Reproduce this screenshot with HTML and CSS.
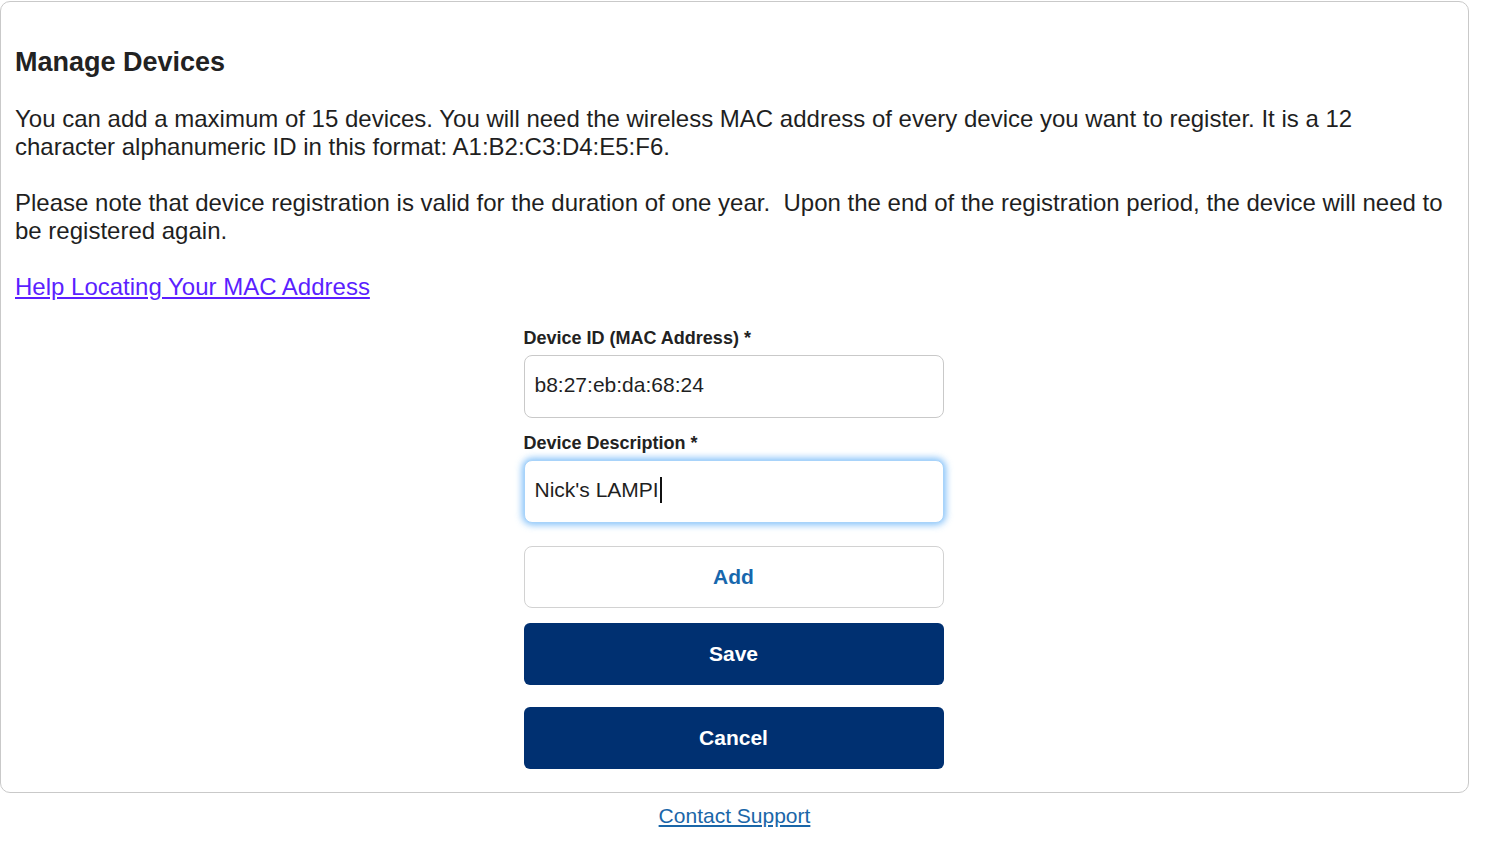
FILE: index.html
```html
<!DOCTYPE html>
<html lang="en">
<head>
<meta charset="utf-8">
<title>Manage Devices</title>
<link rel="stylesheet" href="styles.css">
</head>
<body>
<div class="page">
  <div class="card">
    <h2 class="title">Manage Devices</h2>
    <p class="text">You can add a maximum of 15 devices. You will need the wireless MAC address of every device you want to register. It is a 12 character alphanumeric ID in this format: A1:B2:C3:D4:E5:F6.</p>
    <p class="text">Please note that device registration is valid for the duration of one year.&nbsp; Upon the end of the registration period, the device will need to be registered again.</p>
    <p class="text"><a class="help-link" href="#">Help Locating Your MAC Address</a></p>
    <form class="form">
      <label class="label">Device ID (MAC Address) *</label>
      <div class="field">b8:27:eb:da:68:24</div>
      <label class="label">Device Description *</label>
      <div class="field field-focus">Nick's LAMPI<span class="caret"></span></div>
      <button type="button" class="btn btn-outline">Add</button>
      <button type="button" class="btn btn-primary btn-save">Save</button>
      <button type="button" class="btn btn-primary">Cancel</button>
    </form>
  </div>
  <div class="footer"><a class="support-link" href="#">Contact Support</a></div>
</div>
</body>
</html>
```
FILE: styles.css
```css
* { box-sizing: border-box; }
body {
  margin: 0;
  background: #fff;
  font-family: "Liberation Sans", Arial, Helvetica, sans-serif;
  color: #1f1f1f;
}
.page {
  width: 1469px;
  padding-top: 1px;
}
.card {
  border: 1px solid #c9c9c9;
  border-radius: 10px;
  padding: 45px 16px 23px 14px;
}
.title {
  margin: 0 0 28px;
  font-size: 27px;
  line-height: 30px;
  font-weight: 700;
  color: #222;
}
.text {
  margin: 0 0 28px;
  font-size: 24px;
  line-height: 28px;
  color: #1f1f1f;
}
.text:last-of-type { margin-bottom: 25px; }
.help-link { color: #5b1fff; text-decoration: underline; }
.form {
  width: 420px;
  margin: 0 auto;
  display: flex;
  flex-direction: column;
}
.label {
  display: block;
  font-size: 18px;
  line-height: 24px;
  font-weight: 700;
  color: #222;
  margin-bottom: 5px;
}
.field {
  height: 63px;
  border: 1px solid #c9c9c9;
  border-radius: 8px;
  padding: 0 10px 3px;
  display: flex;
  align-items: center;
  font-size: 21px;
  color: #1f1f1f;
  margin-bottom: 13px;
  background: #fff;
}
.field-focus {
  border-color: #a8d3fa;
  box-shadow: 0 0 7px 2px rgba(90, 172, 247, 0.75);
  margin-bottom: 23px;
}
.caret {
  display: inline-block;
  width: 2px;
  height: 26px;
  background: #111;
  margin-left: 1px;
}
.btn {
  height: 62px;
  border-radius: 8px;
  font-family: "Liberation Sans", Arial, Helvetica, sans-serif;
  font-size: 21px;
  font-weight: 700;
  cursor: pointer;
}
.btn-outline {
  background: #fff;
  border: 1px solid #d2d2d2;
  color: #1767ad;
  margin-bottom: 15px;
}
.btn-primary {
  background: #003071;
  border: none;
  border-radius: 6px;
  color: #fff;
}
.btn-save { margin-bottom: 22px; }
.footer {
  text-align: center;
  padding-top: 11px;
}
.support-link {
  font-size: 21px;
  color: #1a66a8;
  text-decoration: underline;
}
```
